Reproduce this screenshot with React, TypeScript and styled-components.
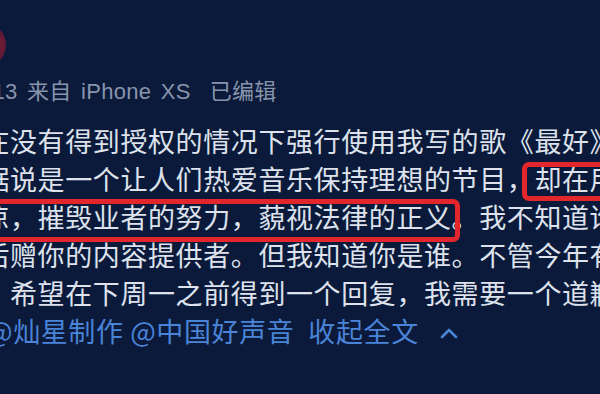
import React from 'react';
import styled, { createGlobalStyle } from 'styled-components';

const GlobalStyle = createGlobalStyle`
  html, body {
    margin: 0;
    padding: 0;
    background: #0b1a3a;
  }
  body {
    width: 600px;
    height: 394px;
    overflow: hidden;
  }
`;

const Page = styled.div`
  width: 600px;
  height: 394px;
  overflow: hidden;
  background: #0b1a3a;
  font-family: "Noto Sans CJK SC", "Noto Sans", sans-serif;
`;

const Header = styled.div`
  display: flex;
  align-items: flex-start;
  height: 77px;
  padding-top: 22px;
  box-sizing: border-box;
`;

const Avatar = styled.div`
  width: 46px;
  height: 46px;
  flex: none;
  border-radius: 50%;
  margin-left: -40px;
  background: radial-gradient(circle at 75% 50%, #7a1d32 0%, #4a1838 55%, #1a1b40 100%);
`;

const Meta = styled.div`
  margin-left: -7.5px;
  height: 30px;
  line-height: 30px;
  font-size: 22px;
  color: #8894ac;
  font-family: "Liberation Sans", "Noto Sans CJK SC", sans-serif;
  letter-spacing: 0.3px;
  word-spacing: 3px;
  white-space: nowrap;
`;

const Edited = styled.span`
  margin-left: 19px;
`;

const Body = styled.div`
  margin-top: 14.5px;
  font-size: 27px;
  line-height: 38px;
  letter-spacing: 0.6px;
  color: #dde2ec;
`;

const Line = styled.div<{ $indent?: number }>`
  white-space: nowrap;
  margin-left: ${(p) => p.$indent ?? -17.6}px;
`;

const Mark = styled.span<{ $box: string }>`
  position: relative;
  display: inline-block;

  &::after {
    content: '';
    position: absolute;
    inset: ${(p) => p.$box};
    border: 5px solid #e3262b;
    border-radius: 7px;
    pointer-events: none;
  }
`;

const Link = styled.span`
  color: #4a84d8;
`;

const Fold = styled.span`
  color: #4a84d8;
  margin-left: 14px;
`;

const Caret = styled.svg`
  margin-left: 21px;
  vertical-align: 3px;
`;

export default function App() {
  return (
    <>
      <GlobalStyle />
      <Page>
        <Header>
          <Avatar />
        </Header>
        <Meta>
          13 来自 iPhone XS<Edited>已编辑</Edited>
        </Meta>
        <Body>
          <Line>在没有得到授权的情况下强行使用我写的歌《最好》，</Line>
          <Line>
            据说是一个让人们热爱音乐保持理想的节目，
            <Mark $box="2.5px -60px -3.5px -12px">却在用这样的方式让人心</Mark>
          </Line>
          <Line>
            <Mark $box="1.5px 19px -6.5px -30px">凉，摧毁业者的努力，藐视法律的正义。</Mark>
            我不知道谁是你的
          </Line>
          <Line>后赠你的内容提供者。但我知道你是谁。不管今年有没有</Line>
          <Line>，希望在下周一之前得到一个回复，我需要一个道歉。</Line>
          <Line $indent={-13}>
            <Link>@灿星制作</Link> <Link>@中国好声音</Link>
            <Fold>收起全文</Fold>
            <Caret width="18" height="12" viewBox="0 0 18 12">
              <polyline
                points="2,10 9,3 16,10"
                fill="none"
                stroke="#4a84d8"
                strokeWidth="2.6"
                strokeLinecap="round"
                strokeLinejoin="round"
              />
            </Caret>
          </Line>
        </Body>
      </Page>
    </>
  );
}
